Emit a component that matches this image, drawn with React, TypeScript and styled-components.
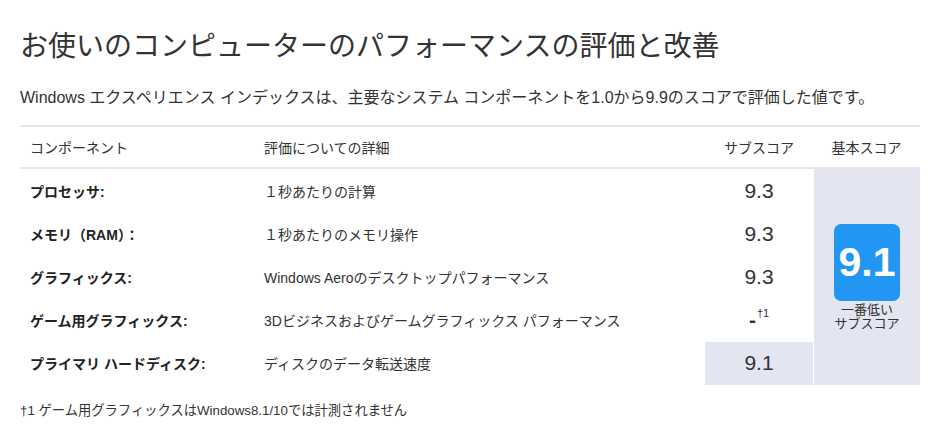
import { FC } from "react";
import styled, { createGlobalStyle } from "styled-components";

const GlobalStyle = createGlobalStyle`
	html, body {
		margin: 0;
		padding: 0;
		background: #fff;
	}
	body {
		font-family: "Liberation Sans", "Noto Sans CJK JP", sans-serif;
		color: #333;
	}
`;

const Page = styled.div`
	width: 940px;
	padding: 0 20px;
	box-sizing: border-box;
`;

const Title = styled.h1`
	margin: 30px 0 0;
	font-size: 28px;
	line-height: 34px;
	font-weight: normal;
	color: #333;
`;

const Lead = styled.p`
	margin: 23px 0 0;
	font-size: 16px;
	line-height: 22px;
`;

const Table = styled.div`
	margin-top: 16px;
	display: grid;
	grid-template-columns: 234px 451px 108px 107px;
	grid-template-rows: 42px repeat(5, 43.2px);
	border-top: 2px solid #e6e6e6;
`;

const HeadCell = styled.div<{ $center?: boolean }>`
	display: flex;
	align-items: center;
	justify-content: ${p => (p.$center ? "center" : "flex-start")};
	padding: ${p => (p.$center ? "0" : "0 10px")};
	font-size: 14px;
	border-bottom: 2px solid #e6e6e6;
`;

const LabelCell = styled.div`
	display: flex;
	align-items: center;
	padding: 0 10px;
	font-size: 14px;
	font-weight: bold;
	color: #222;
`;

const DetailCell = styled.div`
	display: flex;
	align-items: center;
	padding: 0 10px;
	font-size: 14px;
`;

const ScoreCell = styled.div<{ $lowest?: boolean }>`
	display: flex;
	align-items: center;
	justify-content: center;
	font-size: 21px;
	background: ${p => (p.$lowest ? "#e3e5f1" : "transparent")};
`;

const Dash = styled.span`
	font-weight: bold;
`;

const Sup = styled.span`
	font-size: 11px;
	position: relative;
	top: -7px;
	margin-left: 1px;
`;

const BaseCell = styled.div`
	grid-column: 4;
	grid-row: 2 / span 5;
	background: #e3e5f1;
	border-left: 1px solid #fff;
	display: flex;
	flex-direction: column;
	align-items: center;
	padding-top: 55px;
`;

const Badge = styled.div`
	width: 66px;
	height: 77px;
	border-radius: 7px;
	background: #2196f3;
	color: #fff;
	font-size: 41px;
	font-weight: bold;
	display: flex;
	align-items: center;
	justify-content: center;
`;

const BadgeNote = styled.div`
	margin-top: 2px;
	font-size: 13px;
	line-height: 14px;
	text-align: center;
	color: #333;
`;

const Footnote = styled.p`
	margin: 17px 0 0;
	font-size: 13.3px;
	line-height: 18px;
`;

type Row = {
	label: string;
	detail: string;
	score: string;
	note?: string;
	lowest?: boolean;
};

const rows: Row[] = [
	{ label: "プロセッサ:", detail: "１秒あたりの計算", score: "9.3" },
	{ label: "メモリ（RAM）：", detail: "１秒あたりのメモリ操作", score: "9.3" },
	{ label: "グラフィックス:", detail: "Windows Aeroのデスクトップパフォーマンス", score: "9.3" },
	{ label: "ゲーム用グラフィックス:", detail: "3Dビジネスおよびゲームグラフィックス パフォーマンス", score: "-", note: "†1" },
	{ label: "プライマリ ハードディスク:", detail: "ディスクのデータ転送速度", score: "9.1", lowest: true }
];

const App: FC = () => {
	return (
		<Page>
			<GlobalStyle />
			<Title>お使いのコンピューターのパフォーマンスの評価と改善</Title>
			<Lead>
				Windows エクスペリエンス インデックスは、主要なシステム コンポーネントを1.0から9.9のスコアで評価した値です。
			</Lead>
			<Table>
				<HeadCell>コンポーネント</HeadCell>
				<HeadCell>評価についての詳細</HeadCell>
				<HeadCell $center>サブスコア</HeadCell>
				<HeadCell $center>基本スコア</HeadCell>
				{rows.map((row, i) => (
					<div key={row.label} style={{ display: "contents" }}>
						<LabelCell style={{ gridRow: i + 2 }}>{row.label}</LabelCell>
						<DetailCell style={{ gridRow: i + 2 }}>{row.detail}</DetailCell>
						<ScoreCell $lowest={row.lowest} style={{ gridRow: i + 2 }}>
							{row.note ? <Dash>{row.score}</Dash> : row.score}
							{row.note && <Sup>{row.note}</Sup>}
						</ScoreCell>
					</div>
				))}
				<BaseCell>
					<Badge>9.1</Badge>
					<BadgeNote>
						一番低い
						<br />
						サブスコア
					</BadgeNote>
				</BaseCell>
			</Table>
			<Footnote>†1 ゲーム用グラフィックスはWindows8.1/10では計測されません</Footnote>
		</Page>
	);
};

export default App;
